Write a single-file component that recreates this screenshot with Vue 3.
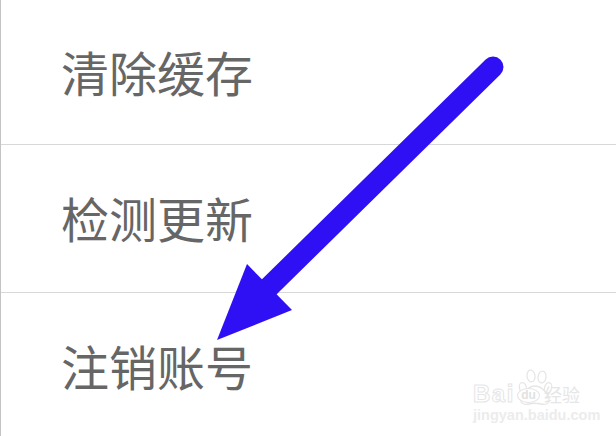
<script setup>
const rows = ['清除缓存', '检测更新', '注销账号']
</script>

<template>
  <div class="screen">
    <div class="list">
      <div v-for="r in rows" :key="r" class="row">{{ r }}</div>
    </div>
    <svg class="arrow" viewBox="0 0 616 436" width="616" height="436">
      <line x1="493" y1="67" x2="265" y2="291" stroke="#2f10f5" stroke-width="21" stroke-linecap="round" />
      <polygon points="217,340 247,264 292,310" fill="#2f10f5" />
    </svg>
    <div class="mark">
      <svg class="paw" viewBox="0 0 36 38" width="36" height="38">
        <g fill="#ffffff" stroke="#e6e6e6" stroke-width="1.3">
          <ellipse cx="6" cy="20" rx="3.5" ry="5.5" transform="rotate(-15 6 20)" />
          <ellipse cx="14" cy="8" rx="4" ry="6" transform="rotate(-8 14 8)" />
          <ellipse cx="25" cy="9" rx="4" ry="6" transform="rotate(8 25 9)" />
          <ellipse cx="31" cy="20" rx="3.5" ry="5.5" transform="rotate(18 31 20)" />
          <path d="M4 31c1-6 8-13 14-13s13 7 14 13c1 5-4 6-8 5-4-1-8-1-12 0-4 1-9 0-8-5z" />
        </g>
      </svg>
      <div class="mark-top">
        <span class="bai">Bai</span>
        <span class="du">du</span>
        <span class="jy">经验</span>
      </div>
      <div class="mark-url">jingyan.baidu.com</div>
    </div>
  </div>
</template>

<style scoped>
.screen {
  position: relative;
  width: 616px;
  height: 436px;
  overflow: hidden;
  background: #ffffff;
}
.list {
  display: flex;
  flex-direction: column;
  border-left: 1px solid #c4c4c4;
  height: 436px;
  box-sizing: border-box;
}
.row {
  height: 147px;
  flex: none;
  box-sizing: border-box;
  display: flex;
  align-items: center;
  padding: 0 0 3px 60px;
  border-bottom: 1px solid #d8d8d8;
  color: #666666;
  font-family: "Noto Sans CJK SC", "Liberation Sans", sans-serif;
  font-size: 48px;
  line-height: 1;
}
.row:first-child {
  height: 145px;
}
.row:nth-child(2) {
  height: 148px;
}
.row:last-child {
  border-bottom: none;
}
.arrow {
  position: absolute;
  left: 0;
  top: 0;
}
.mark {
  position: absolute;
  left: 473px;
  top: 383px;
  width: 120px;
  font-family: "Liberation Sans", "Noto Sans CJK SC", sans-serif;
}
.paw {
  position: absolute;
  left: 44px;
  top: -15px;
}
.mark-top {
  position: relative;
  display: flex;
  align-items: center;
  height: 22px;
}
.bai {
  width: 44px;
  flex: none;
  font-size: 24px;
  font-weight: 700;
  letter-spacing: 1.5px;
  line-height: 22px;
  color: #ffffff;
  -webkit-text-stroke: 1px #e6e6e6;
}
.du {
  flex: none;
  width: 23px;
  height: 15px;
  margin-top: 3px;
  border: 1px solid #e6e6e6;
  border-radius: 50%;
  box-sizing: border-box;
  background: #ffffff;
  color: #e2e2e2;
  font-size: 12px;
  font-weight: 700;
  line-height: 13px;
  text-align: center;
}
.jy {
  flex: none;
  margin-left: 4px;
  font-family: "Noto Sans CJK SC", sans-serif;
  font-size: 18px;
  line-height: 22px;
  color: #e6e6e6;
}
.mark-url {
  margin-top: 3px;
  font-size: 14.5px;
  font-weight: 700;
  line-height: 14px;
  color: #ececec;
  white-space: nowrap;
}
</style>
